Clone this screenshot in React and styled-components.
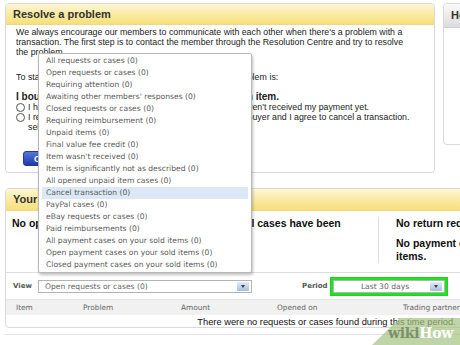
import React from 'react'
import styled, { createGlobalStyle } from 'styled-components'

const menuItems = [
  'All requests or cases (0)',
  'Open requests or cases (0)',
  'Requiring attention (0)',
  "Awaiting other members' responses (0)",
  'Closed requests or cases (0)',
  'Requiring reimbursement (0)',
  'Unpaid items (0)',
  'Final value fee credit (0)',
  "Item wasn't received (0)",
  'Item is significantly not as described (0)',
  'All opened unpaid item cases (0)',
  'Cancel transaction (0)',
  'PayPal cases (0)',
  'eBay requests or cases (0)',
  'Paid reimbursements (0)',
  'All payment cases on your sold items (0)',
  'Open payment cases on your sold items (0)',
  'Closed payment cases on your sold items (0)',
]

export default function App() {
  return (
    <>
      <GlobalStyle />
      <Page>
        <TopRow>
          <Panel $w={430} $h={170}>
            <PanelHead>Resolve a problem</PanelHead>
            <ResolveBody>
              <Intro>
                We always encourage our members to communicate with each other when there's a problem with a<br />
                transaction. The first step is to contact the member through the Resolution Centre and try to resolve<br />
                the problem.
              </Intro>
              <Prompt>To start, please tell us a little more about just what your problem is:</Prompt>
              <Question>I bought an item or I am the seller and I've sold an item.</Question>
              <RadioRow>
                <Radio />
                <span>I have sold the item, and the buyer has paid, but I still haven't received my payment yet.</span>
              </RadioRow>
              <RadioRow>
                <Radio />
                <span>
                  I reached an agreement with the other member, and the buyer and I agree to cancel a transaction.<br />
                  select this option to continue.
                </span>
              </RadioRow>
              <BlueButton>Continue</BlueButton>
            </ResolveBody>
          </Panel>
          <Panel $w={60} $h={142}>
            <PanelHead $tone="gray" $h={23}>Help</PanelHead>
          </Panel>
        </TopRow>

        <CasesPanel>
          <PanelHead $h={21}>Your cases</PanelHead>
          <Summary>
            <SummaryCol $w={191}>No open requests or cases.</SummaryCol>
            <SummaryCol $w={181}>No PayPal cases have been opened.</SummaryCol>
            <SummaryCol $w={260} $divider>
              <p>No return requests.</p>
              <p>No payment cases on your sold<br />items.</p>
            </SummaryCol>
          </Summary>
          <FilterRow>
            <FilterLabel>View</FilterLabel>
            <Select $w={214}>
              <span>Open requests or cases (0)</span>
              <Arrow />
            </Select>
            <FilterLabel $ml={50}>Period</FilterLabel>
            <Highlight>
              <Select $w={112} $center>
                <span>Last 30 days</span>
                <Arrow />
              </Select>
            </Highlight>
          </FilterRow>
          <TableHead>
            <span>Item</span>
            <span>Problem</span>
            <span>Amount</span>
            <span>Opened on</span>
            <span>Trading partner</span>
          </TableHead>
          <EmptyRow>There were no requests or cases found during this time period.</EmptyRow>
        </CasesPanel>
        <NextPanel />

        <Menu>
          {menuItems.map((item, index) => (
            <MenuItem key={`menu-${index}`} $active={index === 11}>
              {item}
            </MenuItem>
          ))}
        </Menu>

        <Watermark>
          <svg width="100" height="30" viewBox="0 0 100 30">
            <polygon points="40,3 100,3 100,30 12,30" fill="rgba(165,195,130,0.7)" />
          </svg>
          <WikiText>
            wiki<b>How</b>
          </WikiText>
        </Watermark>
      </Page>
    </>
  )
}

const GlobalStyle = createGlobalStyle`
  body {
    margin: 0;
    background: #fff;
    overflow: hidden;
  }
`

const Page = styled.div`
  position: relative;
  width: 460px;
  height: 345px;
  overflow: hidden;
  background: #fff;
  font-family: 'Liberation Sans', Arial, sans-serif;
  color: #222;
`

const TopRow = styled.div`
  display: flex;
  align-items: flex-start;
  gap: 8px;
  padding: 3px 0 0 5px;
`

const Panel = styled.section`
  flex-shrink: 0;
  width: ${p => p.$w}px;
  height: ${p => p.$h}px;
  box-sizing: border-box;
  border: 1px solid #d9d9d9;
  border-radius: 4px;
  background: #fff;
  overflow: hidden;
`

const PanelHead = styled.div`
  height: ${p => p.$h || 20}px;
  line-height: ${p => p.$h || 20}px;
  padding-left: 7px;
  font-size: 11px;
  font-weight: bold;
  color: #333;
  background: ${p =>
    p.$tone === 'gray'
      ? 'linear-gradient(#fafafa, #dcdcdc)'
      : 'linear-gradient(#fdf6d3, #f7df78)'};
  border-bottom: 1px solid ${p => (p.$tone === 'gray' ? '#d0d0d0' : '#ecd888')};
`

const ResolveBody = styled.div`
  padding: 2px 10px 0 10px;
  font-size: 8.8px;
  line-height: 10px;
  color: #222;
`

const Intro = styled.p`
  margin: 0;
  white-space: nowrap;
`

const Prompt = styled.p`
  margin: 15px 0 0;
  white-space: nowrap;
  word-spacing: 0.2px;
`

const Question = styled.p`
  margin: 10px 0 0;
  font-size: 10px;
  font-weight: bold;
  white-space: nowrap;
`

const RadioRow = styled.div`
  display: flex;
  align-items: flex-start;
  gap: 3px;
  white-space: nowrap;
`

const Radio = styled.span`
  flex-shrink: 0;
  width: 7px;
  height: 7px;
  margin-top: 1px;
  border: 1px solid #555;
  border-radius: 50%;
  background: #fff;
`

const BlueButton = styled.button`
  display: block;
  margin: 19px 0 0 7px;
  height: 15px;
  padding: 0 10px;
  border: 1px solid #223a94;
  border-radius: 3px;
  background: linear-gradient(#5577dd, #1d3ca8);
  color: #fff;
  font-family: inherit;
  font-size: 9px;
  font-weight: bold;
`

const CasesPanel = styled.section`
  margin: 15px 0 0 5px;
  width: 643px;
  height: 140px;
  box-sizing: border-box;
  border: 1px solid #d9d9d9;
  border-radius: 4px;
  overflow: hidden;
`

const Summary = styled.div`
  display: flex;
  height: 62px;
  box-sizing: border-box;
  padding-top: 6px;
  border-bottom: 1px solid #dedede;
`

const SummaryCol = styled.div`
  width: ${p => p.$w}px;
  box-sizing: border-box;
  padding: 0 ${p => (p.$divider ? 17 : 6)}px;
  margin-bottom: 9px;
  border-left: ${p => (p.$divider ? '1px solid #dedede' : 'none')};
  font-size: 10.5px;
  line-height: 13px;
  font-weight: bold;
  color: #111;

  p {
    margin: 0 0 7px;
  }
`

const FilterRow = styled.div`
  display: flex;
  align-items: center;
  height: 26px;
  padding-left: 7px;
`

const FilterLabel = styled.span`
  margin-left: ${p => p.$ml || 0}px;
  width: 25px;
  font-family: 'DejaVu Sans', Verdana, sans-serif;
  font-size: 7px;
  font-weight: bold;
  color: #555;
`

const Select = styled.div`
  display: flex;
  align-items: center;
  justify-content: ${p => (p.$center ? 'center' : 'flex-start')};
  position: relative;
  width: ${p => p.$w}px;
  height: 13px;
  box-sizing: border-box;
  padding: 0 ${p => (p.$center ? 14 : 6)}px 0 6px;
  border: 1px solid #b4b4b4;
  background: #fff;
  font-family: 'DejaVu Sans', Verdana, sans-serif;
  font-size: 7.6px;
  color: #666;
`

const Arrow = styled.i`
  position: absolute;
  right: 2px;
  top: 1px;
  width: 12px;
  height: 9px;
  border-radius: 1px;
  background: linear-gradient(#e4ecf6, #a7bdd8);

  &::after {
    content: '';
    position: absolute;
    left: 4px;
    top: 3px;
    border-left: 2px solid transparent;
    border-right: 2px solid transparent;
    border-top: 3px solid #2b3f66;
  }
`

const Highlight = styled.div`
  padding: 2px;
  border: 1px solid #1bd61b;
  background: #22e022;
  height: 19px;
  box-sizing: border-box;
  display: flex;
  align-items: center;
  width: 118px;
  margin-left: 3px;
`

const TableHead = styled.div`
  display: grid;
  grid-template-columns: 67px 98px 96px 126px 1fr;
  height: 15px;
  align-items: center;
  padding-left: 10px;
  background: #f1f1f1;
  border-top: 1px solid #e6e6e6;
  font-family: 'DejaVu Sans', Verdana, sans-serif;
  font-size: 7.4px;
  color: #666;
`

const EmptyRow = styled.div`
  height: 13px;
  line-height: 14px;
  text-align: center;
  font-size: 9.3px;
  color: #111;
`

const NextPanel = styled.div`
  margin: 6px 0 0 5px;
  height: 20px;
  border-top: 1px solid #e2e2e2;
`

const Menu = styled.ul`
  position: absolute;
  left: 38px;
  top: 53px;
  width: 214px;
  height: 220px;
  box-sizing: border-box;
  margin: 0;
  padding: 1px 3px;
  list-style: none;
  background: #fff;
  border: 1px solid #b8b8b8;
  border-radius: 2px;
  box-shadow: 1px 2px 3px rgba(0, 0, 0, 0.25);
`

const MenuItem = styled.li`
  height: 12px;
  line-height: 12px;
  padding-left: 4px;
  font-family: 'DejaVu Sans', Verdana, sans-serif;
  font-size: 7.6px;
  color: #5a5a5a;
  white-space: nowrap;
  background: ${p => (p.$active ? '#dce8f6' : 'transparent')};
`

const Watermark = styled.div`
  position: absolute;
  right: 0;
  bottom: 0;
  width: 100px;
  height: 30px;

  svg {
    display: block;
  }
`

const WikiText = styled.span`
  position: absolute;
  left: 28px;
  top: 10px;
  font-family: 'DejaVu Serif', 'Liberation Serif', serif;
  font-size: 14px;
  font-weight: bold;
  color: #7d8f6b;
  letter-spacing: -0.3px;

  b {
    color: #fff;
  }
`
